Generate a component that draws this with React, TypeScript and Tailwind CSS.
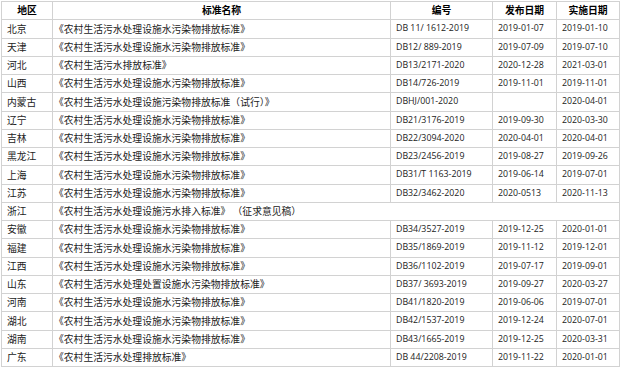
const rows: [string, string, string, string, string][] = [
  ["北京", "《农村生活污水处理设施水污染物排放标准》", "DB 11/ 1612-2019", "2019-01-07", "2019-01-10"],
  ["天津", "《农村生活污水处理设施水污染物排放标准》", "DB12/ 889-2019", "2019-07-09", "2019-07-10"],
  ["河北", "《农村生活污水排放标准》", "DB13/2171-2020", "2020-12-28", "2021-03-01"],
  ["山西", "《农村生活污水处理设施水污染物排放标准》", "DB14/726-2019", "2019-11-01", "2019-11-01"],
  ["内蒙古", "《农村生活污水处理设施污染物排放标准（试行）》", "DBHJ/001-2020", "", "2020-04-01"],
  ["辽宁", "《农村生活污水处理设施水污染物排放标准》", "DB21/3176-2019", "2019-09-30", "2020-03-30"],
  ["吉林", "《农村生活污水处理设施水污染物排放标准》", "DB22/3094-2020", "2020-04-01", "2020-04-01"],
  ["黑龙江", "《农村生活污水处理设施水污染物排放标准》", "DB23/2456-2019", "2019-08-27", "2019-09-26"],
  ["上海", "《农村生活污水处理设施水污染物排放标准》", "DB31/T 1163-2019", "2019-06-14", "2019-07-01"],
  ["江苏", "《农村生活污水处理设施水污染物排放标准》", "DB32/3462-2020", "2020-0513", "2020-11-13"],
  ["浙江", "", "", "", ""],
  ["安徽", "《农村生活污水处理设施水污染物排放标准》", "DB34/3527-2019", "2019-12-25", "2020-01-01"],
  ["福建", "《农村生活污水处理设施水污染物排放标准》", "DB35/1869-2019", "2019-11-12", "2019-12-01"],
  ["江西", "《农村生活污水处理设施水污染物排放标准》", "DB36/1102-2019", "2019-07-17", "2019-09-01"],
  ["山东", "《农村生活污水处理处置设施水污染物排放标准》", "DB37/ 3693-2019", "2019-09-27", "2020-03-27"],
  ["河南", "《农村生活污水处理设施水污染物排放标准》", "DB41/1820-2019", "2019-06-06", "2019-07-01"],
  ["湖北", "《农村生活污水处理设施水污染物排放标准》", "DB42/1537-2019", "2019-12-24", "2020-07-01"],
  ["湖南", "《农村生活污水处理设施水污染物排放标准》", "DB43/1665-2019", "2019-12-25", "2020-03-31"],
  ["广东", "《农村生活污水处理排放标准》", "DB 44/2208-2019", "2019-11-22", "2020-01-01"],
];

const cell = "border-r border-b border-[#d2d2d2] flex items-center overflow-hidden whitespace-nowrap";
const cjk = "font-['Noto_Sans_CJK_SC',sans-serif] text-[9.8px] text-[#222]";
const latin = "font-['Open_Sans',sans-serif] text-[8.8px] text-[#222]";
const head = "font-['Noto_Sans_CJK_SC',sans-serif] text-[9.8px] font-bold text-black justify-center";

export default function App() {
  return (
    <div className="w-[624px] h-[371px] bg-white pt-[1px] pl-[1px]">
      <div className="grid grid-cols-[51px_338px_102px_64px_63px] auto-rows-[18.25px] w-[619px] border-l border-t border-[#d2d2d2]">
        <div className={`${cell} ${head}`}>地区</div>
        <div className={`${cell} ${head}`}>标准名称</div>
        <div className={`${cell} ${head}`}>编号</div>
        <div className={`${cell} ${head}`}>发布日期</div>
        <div className={`${cell} ${head}`}>实施日期</div>

        {rows.map((r) =>
          r[0] === "浙江" ? (
            <div key={r[0]} className="contents">
              <div className={`${cell} ${cjk} pl-[5px]`}>{r[0]}</div>
              <div className={`${cell} ${cjk} col-span-4 pl-[1px]`}>
                《农村生活污水处理设施污水排入标准》 （征求意见稿）
              </div>
            </div>
          ) : (
            <div key={r[0]} className="contents">
              <div className={`${cell} ${cjk} pl-[5px]`}>{r[0]}</div>
              <div className={`${cell} ${cjk} pl-[1px]`}>{r[1]}</div>
              <div className={`${cell} ${latin} pl-[5px]`}>{r[2]}</div>
              <div className={`${cell} ${latin} pl-[5px]`}>{r[3]}</div>
              <div className={`${cell} ${latin} pl-[5px]`}>{r[4]}</div>
            </div>
          )
        )}
      </div>
    </div>
  );
}
